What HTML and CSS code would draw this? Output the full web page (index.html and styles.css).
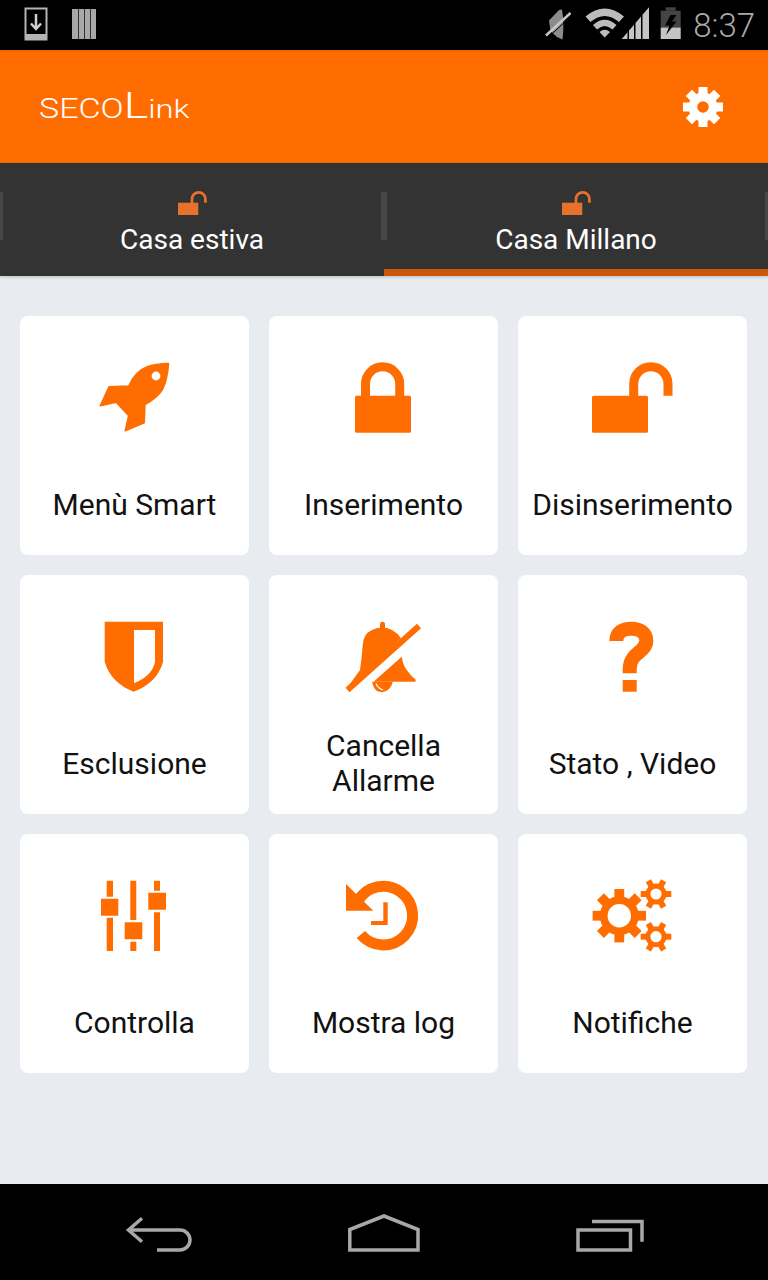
FILE: index.html
```html
<!DOCTYPE html>
<html lang="it">
  <head>
    <meta charset="UTF-8" />
    <meta name="viewport" content="width=device-width, initial-scale=1.0" />
    <title>SECOLink</title>
    <link rel="stylesheet" href="styles.css">
  </head>

  <body>
    <div id="app">
      <div class="status_bar">
        <svg class="status_icon" width="24" height="36" viewBox="24 8 24 36">
          <path d="M25.500 9.500H46.500V40.500H25.500Z" fill="none" stroke="#b4b4b4" stroke-width="2" />
          <path d="M25 35H47V41H25Z" fill="#b4b4b4" />
          <path d="M36 15V29M31 24.500L36 30L41 24.500" fill="none" stroke="#d0d0d0" stroke-width="2.500" />
        </svg>
        <svg class="status_icon status_bars" width="25" height="36" viewBox="72 8 25 36">
          <path d="M72 10H78V40H72ZM78.700 10H84V40H78.700ZM84.700 10H90V40H84.700ZM90.700 10H96V40H90.700Z" fill="#a8a8a8" />
        </svg>
        <svg class="status_icon status_right" width="140" height="36" viewBox="544 8 140 36">
          <path d="M550 21.500L560 11L563 10.500Q565.500 25 563.500 40.500L558 38L551.500 32Z" fill="#8c8c8c" />
          <path d="M547 36.500L571.500 14" stroke="#c8c8c8" stroke-width="2.500" />
          <path d="M547 36.500L571.500 14" stroke="#000" stroke-width="1" transform="translate(2.500 1.500)" />
          <path d="M586.500 17.500Q605.700 1.500 625 17.500L620 23Q605.700 11 591.500 23Z" fill="#bcbcbc" />
          <path d="M594 26Q605.700 15.500 617.500 26L613.500 30.500Q605.700 23.500 598 30.500Z" fill="#bcbcbc" />
          <path d="M600.500 33Q605.700 28.500 611 33L605.700 38.500Z" fill="#bcbcbc" />
          <path d="M622.700 40L628.500 33.300V40ZM630 31.500L635 25.700V40H630ZM636.500 24L642 17.500V40H636.500ZM643.500 15.800L650 8.300V40H643.500Z" fill="#c4c4c4" />
          <path d="M666.700 8.300H676.700V11.700H666.700Z" fill="#444" />
          <path d="M661.700 11.700H681.700V28.500H661.700Z" fill="#444" />
          <path d="M661.700 28.500H681.700V40H661.700Z" fill="#c4c4c4" />
          <path d="M671.500 16L666 26.500H670.500L667 36L677.500 22.500H673L677.500 16Z" fill="#000" />
        </svg>
        <span class="status_time">8:37</span>
      </div>

      <div class="app_header">
        <div class="logo"><span class="logo_seco">SECO</span><span class="logo_l">L</span><span class="logo_ink">ink</span></div>
        <svg class="settings_icon" width="44" height="44" viewBox="-22 -22 44 44">
          <g fill="#fff">
            <rect x="-4.500" y="-20" width="9" height="40" />
            <rect x="-4.500" y="-20" width="9" height="40" transform="rotate(45)" />
            <rect x="-4.500" y="-20" width="9" height="40" transform="rotate(90)" />
            <rect x="-4.500" y="-20" width="9" height="40" transform="rotate(135)" />
            <circle r="14.500" />
          </g>
          <circle r="5.800" fill="#ff6d00" />
        </svg>
      </div>

      <div class="tab_bar">
        <div class="tab_item">
          <svg class="tab_icon" width="29" height="25" viewBox="0 0 29 25">
            <path d="M0 12.700H20.300V25H0Z" fill="#e5732c" />
            <path d="M14 13V9A6.700 6.700 0 0 1 27.400 9V12.700" fill="none" stroke="#e5732c" stroke-width="2.700" />
          </svg>
          <span>Casa estiva</span>
        </div>
        <div class="tab_item active">
          <svg class="tab_icon" width="29" height="25" viewBox="0 0 29 25">
            <path d="M0 12.700H20.300V25H0Z" fill="#e5732c" />
            <path d="M14 13V9A6.700 6.700 0 0 1 27.400 9V12.700" fill="none" stroke="#e5732c" stroke-width="2.700" />
          </svg>
          <span>Casa Millano</span>
        </div>
      </div>

      <div class="menu_area">
        <div class="menu_grid">
          <div class="menu_card">
            <svg class="menu_icon" viewBox="0 0 81 80">
              <path class="icon_round" fill-rule="evenodd" d="M74.500 6.500Q61 6.500 52.700 10Q41 14.500 34.800 29L15 29.800L6.300 48.800L22.200 45.300L34.700 58.700L31.300 73.700L50.200 65.800L50.900 47.500Q63 41 68.500 32.500Q73.500 22 74.500 6.500ZM62 13.800A5.200 5.200 0 1 0 62 24.200A5.200 5.200 0 1 0 62 13.800Z" />
            </svg>
            <div class="menu_label">Menù Smart</div>
          </div>
          <div class="menu_card">
            <svg class="menu_icon" viewBox="0 0 81 80">
              <rect x="12" y="38.700" width="56" height="37" rx="1.500" />
              <path class="icon_line" stroke-width="9" d="M22.500 39V26.900A17.100 17.100 0 0 1 56.700 26.900V39" />
            </svg>
            <div class="menu_label">Inserimento</div>
          </div>
          <div class="menu_card">
            <svg class="menu_icon" viewBox="0 0 81 80">
              <rect x="0" y="38.700" width="56" height="37" rx="1.500" />
              <path class="icon_line" stroke-width="9" d="M41.700 39V26.900A17.150 17.150 0 0 1 76 26.900V38.700" />
            </svg>
            <div class="menu_label">Disinserimento</div>
          </div>

          <div class="menu_card">
            <svg class="menu_icon" viewBox="0 0 81 80">
              <path fill-rule="evenodd" d="M10.700 5.700H69V46Q63 67 39.700 75.700Q17 67 10.700 46ZM40 14V67.300Q58 60 61 46V14Z" />
            </svg>
            <div class="menu_label">Esclusione</div>
          </div>
          <div class="menu_card">
            <svg class="menu_icon" viewBox="0 0 81 80">
              <rect x="37" y="5.700" width="5" height="9" rx="2.500" />
              <path d="M4 72L17 54Q19 40 19.700 29Q20.500 18 28 14.500Q38.500 9 49 14Q54.500 17 58 22.300L9 68Z" />
              <path class="icon_line" stroke-width="6" d="M4.500 74L76 10" />
              <path d="M58.700 40.700Q60 49 63.700 54Q68 60 73 64L72 65.700H30.500Z" />
              <path d="M29.300 65.700Q30 72 34 75Q41 78 46 73Q49 70 49.700 65.700Z" />
              <path d="M33 67.500Q34.500 72 40 74" fill="none" stroke="#fff" stroke-width="1.200" />
            </svg>
            <div class="menu_label">Cancella<br />Allarme</div>
          </div>
          <div class="menu_card">
            <svg class="menu_icon" viewBox="0 0 81 80">
              <path class="icon_line" stroke-width="14" d="M24.300 25C24.300 16 31 12.700 39.500 12.700C48 12.700 54.300 17 54.300 24.500C54.300 37 37.700 36 37.700 53V57.300" />
              <rect x="30.700" y="64" width="14" height="11.700" />
            </svg>
            <div class="menu_label">Stato , Video</div>
          </div>

          <div class="menu_card">
            <svg class="menu_icon" viewBox="0 0 81 80">
              <path d="M12.700 5.700H19V21.700H12.700ZM12.700 42.700H19V76H12.700ZM7 23.700H24.300V40.700H7Z" />
              <path d="M36.300 5.700H42.300V45H36.300ZM36.300 66.700H42.300V76H36.300ZM30.700 47.300H48.300V64.300H30.700Z" />
              <path d="M60 5.700H66V15.700H60ZM60 37.300H66V76H60ZM54.300 17.700H72V34.700H54.300Z" />
            </svg>
            <div class="menu_label">Controlla</div>
          </div>
          <div class="menu_card">
            <svg class="menu_icon" viewBox="0 0 81 80">
              <path class="icon_line" stroke-width="11" d="M14.900 26A29.300 29.300 0 1 1 17.900 59.500" />
              <path d="M3 9V35.700H30.300Z" />
              <path d="M40.300 27.300H44.700V50H28V46H40.300Z" />
            </svg>
            <div class="menu_label">Mostra log</div>
          </div>
          <div class="menu_card">
            <svg class="menu_icon" viewBox="0 0 81 80">
              <defs>
                <g id="small_gear">
                  <rect x="-3" y="-15.300" width="6" height="30.600" />
                  <rect x="-3" y="-15.300" width="6" height="30.600" transform="rotate(60)" />
                  <rect x="-3" y="-15.300" width="6" height="30.600" transform="rotate(120)" />
                  <circle r="10.500" />
                  <circle r="5.600" fill="#fff" />
                </g>
              </defs>
              <g transform="translate(27.300 40.700)">
                <rect x="-4.900" y="-26.700" width="9.800" height="53.400" />
                <rect x="-4.900" y="-26.700" width="9.800" height="53.400" transform="rotate(45)" />
                <rect x="-4.900" y="-26.700" width="9.800" height="53.400" transform="rotate(90)" />
                <rect x="-4.900" y="-26.700" width="9.800" height="53.400" transform="rotate(135)" />
                <circle r="19.500" />
                <circle r="11.700" fill="#fff" />
              </g>
              <use href="#small_gear" transform="translate(64 19) rotate(90)" />
              <use href="#small_gear" transform="translate(64 61.700) rotate(90)" />
            </svg>
            <div class="menu_label">Notifiche</div>
          </div>
        </div>
      </div>

      <div class="nav_bar">
        <svg width="72" height="64" viewBox="124 1200 72 64">
          <path class="nav_line" d="M142 1218.300L128.500 1230L142 1241.700M128.500 1230H180A10 10 0 0 1 180 1250H157" />
        </svg>
        <svg width="72" height="64" viewBox="348 1200 72 64">
          <path class="nav_line" d="M384 1216L349.800 1229.500V1250H418V1229.500Z" />
        </svg>
        <svg width="72" height="64" viewBox="572 1200 72 64">
          <path class="nav_line" d="M578 1230H630.500V1250H578Z" />
          <path class="nav_line" d="M592 1221.500H642V1241.700" />
        </svg>
      </div>
    </div>
  </body>
</html>
```

FILE: styles.css
```css
* {
  box-sizing: border-box;
}

body {
  margin: 0;
  background-color: #000;
  font-family: Roboto, "Liberation Sans", sans-serif;
}

svg {
  display: block;
}

#app {
  display: flex;
  flex-direction: column;
  width: 768px;
  height: 1280px;
  overflow: hidden;
}

.status_bar {
  display: flex;
  align-items: center;
  flex: 0 0 50px;
  padding: 0 13px 0 24px;
  background-color: #000;
}

.status_bars {
  margin-left: 24px;
}

.status_right {
  margin-left: auto;
}

.status_time {
  margin-top: 1px;
  margin-left: 10px;
  color: #a8a8a8;
  font-size: 33px;
  font-weight: 300;
}

.app_header {
  display: flex;
  align-items: center;
  justify-content: space-between;
  flex: 0 0 113px;
  padding: 0 43px 0 39px;
  background: linear-gradient(#e86400, #ff6d00 3px);
}

.logo {
  display: flex;
  align-items: baseline;
  width: 110px;
  margin-top: -3px;
  color: #fff;
  font-weight: 300;
  white-space: nowrap;
  transform: scaleX(1.26);
  transform-origin: left center;
}

.logo_seco {
  font-size: 27px;
}

.logo_l {
  font-size: 37px;
}

.logo_ink {
  font-size: 26px;
}

.tab_bar {
  position: relative;
  z-index: 1;
  display: flex;
  flex: 0 0 113px;
  background-color: #333;
  box-shadow: 0 1px 3px rgba(0, 0, 0, 0.2);
}

.tab_item {
  position: relative;
  display: flex;
  flex-direction: column;
  align-items: center;
  flex: 1;
  padding-top: 27px;
  color: #fff;
  font-size: 28px;
  line-height: 36px;
}

.tab_item span {
  margin-top: 7px;
}

.tab_item::before,
.tab_item::after {
  content: "";
  position: absolute;
  top: 29px;
  width: 3px;
  height: 48px;
  background-color: #474747;
}

.tab_item::before {
  left: 0;
}

.tab_item::after {
  right: 0;
}

.tab_item.active {
  border-bottom: 7px solid #c85a0a;
}

.menu_area {
  flex: 1;
  padding: 40px 21px 0 20px;
  background-color: #e8ebf0;
}

.menu_grid {
  display: grid;
  grid-template-columns: repeat(3, 229px);
  grid-auto-rows: 239px;
  gap: 20px;
}

.menu_card {
  display: flex;
  flex-direction: column;
  align-items: center;
  padding-top: 41px;
  border-radius: 8px;
  background-color: #fff;
}

.menu_icon {
  flex: 0 0 80px;
  width: 81px;
  height: 80px;
  overflow: visible;
  fill: #ff6d00;
}

.icon_line {
  fill: none;
  stroke: #ff6d00;
}

.icon_round {
  stroke: #ff6d00;
  stroke-width: 1.600;
  stroke-linejoin: round;
}

.menu_label {
  display: flex;
  align-items: center;
  justify-content: center;
  height: 70px;
  margin-top: 32px;
  color: #111;
  font-size: 30px;
  line-height: 35px;
  text-align: center;
}

.nav_bar {
  display: flex;
  justify-content: center;
  gap: 152px;
  flex: 0 0 96px;
  padding-top: 16px;
  background-color: #000;
}

.nav_line {
  fill: none;
  stroke: #a8a8a8;
  stroke-width: 3.500;
}
```
